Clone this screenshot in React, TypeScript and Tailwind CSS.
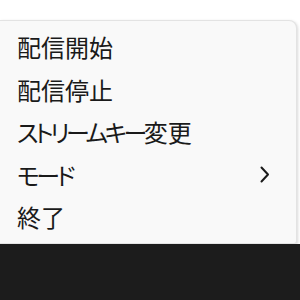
import React from "react";

type Seg = { t: string; kana?: boolean };
const items: Seg[][] = [
  [{ t: "配信開始" }],
  [{ t: "配信停止" }],
  [{ t: "ストリームキー", kana: true }, { t: "変更" }],
  [{ t: "モード", kana: true }],
  [{ t: "終了" }],
];

export default function App() {
  return (
    <div className="w-[300px] h-[300px] overflow-hidden flex flex-col bg-white" style={{ fontFamily: '"Noto Sans CJK JP", "Noto Sans", sans-serif' }}>
      <div className="h-[244px] pt-[20px] pr-[3px] bg-white">
        <div className="h-[224px] bg-[#f9f9f9] border-t border-r border-b border-[#e3e3e3] rounded-tr-[8px] rounded-br-[3px] shadow-[1px_1px_3px_rgba(0,0,0,0.15)] pt-[5px] flex flex-col">
          {items.map((segs, i) => (
            <div key={i} className="h-[42.5px] flex items-center pl-[17px] pr-[26px] justify-between text-[24px] text-[#1a1a1a]" style={{ fontFeatureSettings: '"palt"' }}>
              <span>
                {segs.map((s, j) => (
                  <span key={j} className={s.kana ? "tracking-[-3.5px]" : ""}>{s.t}</span>
                ))}
              </span>
              {i === 3 && (
                <svg width="10" height="17" viewBox="0 0 10 17" fill="none">
                  <path d="M1.5 1.5 L8 8.5 L1.5 15.5" stroke="#1a1a1a" strokeWidth="2" strokeLinecap="round" strokeLinejoin="round" />
                </svg>
              )}
            </div>
          ))}
        </div>
      </div>
      <div className="flex-1 bg-[#1c1c1c]" />
    </div>
  );
}
